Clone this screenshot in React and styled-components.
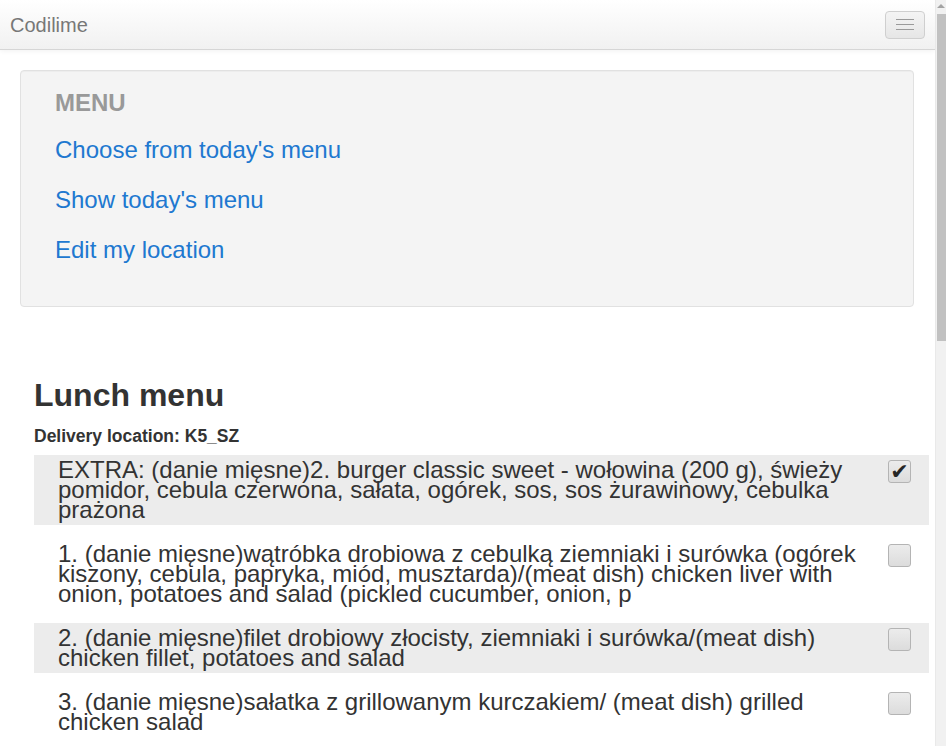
import React from "react";
import styled, { createGlobalStyle } from "styled-components";

const GlobalStyle = createGlobalStyle`
  body {
    margin: 0;
    font-family: "Liberation Sans", Arial, sans-serif;
    color: #333;
    background: #fff;
    overflow: hidden;
  }
`;

const Page = styled.div`
  display: flex;
  height: 100vh;
  overflow: hidden;
`;

const Main = styled.main`
  flex: 1;
  min-width: 0;
  overflow: hidden;
`;

/* the window's own scrollbar, as it shows in the screenshot */
const ScrollTrack = styled.div`
  flex: 0 0 10px;
  display: flex;
  flex-direction: column;
  align-items: flex-end;
  background: #f1f1f1;
  border-left: 1px solid #e9e9e9;
`;

const ArrowUp = styled.div`
  flex: 0 0 14px;
  width: 100%;
  display: flex;
  align-items: center;
  justify-content: center;

  &::before {
    content: "";
    border-left: 4px solid transparent;
    border-right: 4px solid transparent;
    border-bottom: 4px solid #a3a3a3;
    margin-top: -2px;
  }
`;

const Thumb = styled.div`
  flex: 0 0 ${(p) => p.$size}px;
  width: 9px;
  background: #c1c1c1;
`;

const Navbar = styled.nav`
  height: 49px;
  display: flex;
  align-items: center;
  justify-content: space-between;
  padding: 0 10px;
  background: linear-gradient(to bottom, #ffffff 0%, #f1f1f1 100%);
  border-bottom: 1px solid #d6d6d6;
  box-shadow: 0 1px 5px rgba(0, 0, 0, 0.06);
`;

const Brand = styled.a`
  font-size: 20px;
  line-height: 20px;
  color: #777;
  text-decoration: none;
`;

const Toggle = styled.button`
  width: 40px;
  height: 28px;
  padding: 0;
  display: flex;
  flex-direction: column;
  align-items: center;
  justify-content: center;
  gap: 4px;
  border: 1px solid #cfcfcf;
  border-radius: 4px;
  background: linear-gradient(to bottom, #f4f4f4 0%, #e6e6e6 100%);
`;

const Bar = styled.span`
  display: block;
  width: 18px;
  height: 1px;
  background: #9a9a9a;
`;

const Well = styled.div`
  margin: 20px 21px 0 20px;
  padding: 19px 34px 31px;
  background: #f4f4f4;
  border: 1px solid #e1e1e1;
  border-radius: 4px;
  box-shadow: inset 0 1px 1px rgba(0, 0, 0, 0.03);
`;

const MenuTitle = styled.div`
  font-size: 24px;
  line-height: 26px;
  font-weight: bold;
  color: #999;
`;

const MenuList = styled.ul`
  list-style: none;
  margin: 9px 0 0;
  padding: 0;
`;

const MenuLink = styled.a`
  display: block;
  font-size: 24px;
  line-height: 50px;
  color: #2078d0;
  text-decoration: none;
`;

const Section = styled.section`
  padding: 71px 6px 40px 34px;
`;

const Title = styled.h2`
  margin: 0;
  font-size: 32px;
  line-height: 35px;
  font-weight: bold;
`;

const Location = styled.div`
  margin-top: 13px;
  font-size: 17.5px;
  line-height: 20px;
  font-weight: bold;
`;

const Items = styled.div`
  margin-top: 9px;
`;

const Row = styled.label`
  display: grid;
  grid-template-columns: 1fr 23px;
  column-gap: 16px;
  align-items: start;
  padding: ${(p) => (p.$striped ? "5px 18px 5px 24px" : "19px 18px 19px 24px")};
  background: ${(p) => (p.$striped ? "#ececec" : "transparent")};
`;

const ItemText = styled.div`
  font-size: 24px;
  line-height: 20px;
  color: #333;
`;

const Check = styled.input`
  appearance: none;
  margin: 0;
  width: 23px;
  height: 23px;
  border: 1px solid #b4b4b4;
  border-radius: 3px;
  background: linear-gradient(to bottom, #ececec 0%, #dcdcdc 100%);
  display: flex;
  align-items: center;
  justify-content: center;

  &:checked::after {
    content: "✔";
    font-family: "DejaVu Sans", sans-serif;
    font-size: 22px;
    line-height: 1;
    color: #262626;
    margin-top: 1px;
  }
`;

const dishes = [
  {
    text: "EXTRA: (danie mięsne)2. burger classic sweet - wołowina (200 g), świeży pomidor, cebula czerwona, sałata, ogórek, sos, sos żurawinowy, cebulka prażona",
    checked: true,
  },
  {
    text: "1. (danie mięsne)wątróbka drobiowa z cebulką ziemniaki i surówka (ogórek kiszony, cebula, papryka, miód, musztarda)/(meat dish) chicken liver with onion, potatoes and salad (pickled cucumber, onion, p",
  },
  {
    text: "2. (danie mięsne)filet drobiowy złocisty, ziemniaki i surówka/(meat dish) chicken fillet, potatoes and salad",
  },
  {
    text: "3. (danie mięsne)sałatka z grillowanym kurczakiem/ (meat dish) grilled chicken salad",
  },
];

export default function App() {
  return (
    <Page>
      <GlobalStyle />
      <Main>
        <Navbar>
          <Brand href="#">Codilime</Brand>
          <Toggle type="button" aria-label="menu">
            <Bar />
            <Bar />
            <Bar />
          </Toggle>
        </Navbar>

        <Well>
          <MenuTitle>MENU</MenuTitle>
          <MenuList>
            <li><MenuLink href="#">Choose from today's menu</MenuLink></li>
            <li><MenuLink href="#">Show today's menu</MenuLink></li>
            <li><MenuLink href="#">Edit my location</MenuLink></li>
          </MenuList>
        </Well>

        <Section>
          <Title>Lunch menu</Title>
          <Location>Delivery location: K5_SZ</Location>
          <Items>
            {dishes.map((d, i) => (
              <Row key={i} $striped={i % 2 === 0}>
                <ItemText>{d.text}</ItemText>
                <Check type="checkbox" defaultChecked={!!d.checked} />
              </Row>
            ))}
          </Items>
        </Section>
      </Main>

      <ScrollTrack>
        <ArrowUp />
        <Thumb $size={327} />
      </ScrollTrack>
    </Page>
  );
}
